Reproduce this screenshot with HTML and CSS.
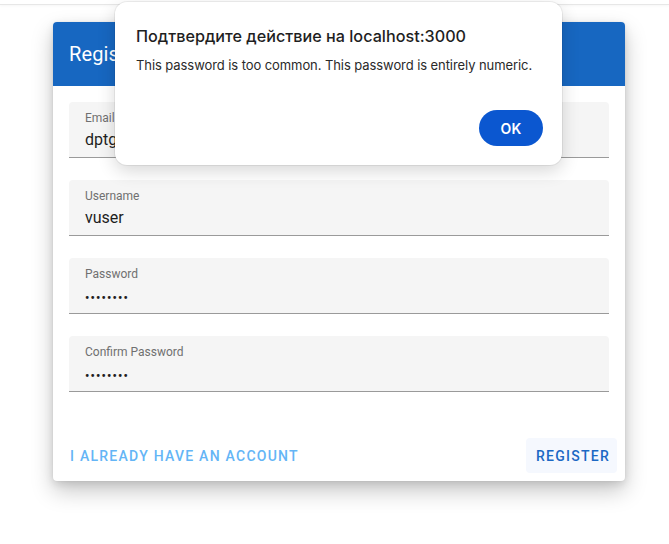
FILE: index.html
```html
<!DOCTYPE html>
<html lang="en">
<head>
<meta charset="utf-8">
<title>Register</title>
<link rel="stylesheet" href="styles.css">
</head>
<body>
<div class="topbar"></div>
<main class="page">
  <section class="card">
    <header class="card-header">
      <h1 class="card-title">Register</h1>
    </header>
    <div class="card-body">
      <div class="field">
        <span class="field-label">Email</span>
        <span class="field-value">dptgmail@example.com</span>
      </div>
      <div class="field">
        <span class="field-label">Username</span>
        <span class="field-value">vuser</span>
      </div>
      <div class="field">
        <span class="field-label">Password</span>
        <span class="field-value dots">••••••••</span>
      </div>
      <div class="field">
        <span class="field-label">Confirm Password</span>
        <span class="field-value dots">••••••••</span>
      </div>
    </div>
    <footer class="card-actions">
      <button class="btn btn-link">I already have an account</button>
      <button class="btn btn-register">Register</button>
    </footer>
  </section>
</main>
<div class="dialog" role="dialog">
  <h2 class="dialog-title">Подтвердите действие на localhost:3000</h2>
  <p class="dialog-text">This password is too common. This password is entirely numeric.</p>
  <div class="dialog-actions">
    <button class="dialog-ok">OK</button>
  </div>
</div>
</body>
</html>
```
FILE: styles.css
```css
* { box-sizing: border-box; }
html, body { margin: 0; padding: 0; background: #ffffff; }
body {
  font-family: Roboto, "Noto Sans", "Liberation Sans", sans-serif;
  width: 669px;
  height: 544px;
  overflow: hidden;
  position: relative;
}
.topbar {
  height: 5px;
  border-bottom: 1px solid #e7e7e7;
  box-shadow: 0 1px 3px rgba(0,0,0,0.04);
}
.page {
  padding: 17px 0 0 53px;
}
.card {
  width: 572px;
  background: #fff;
  border-radius: 4px;
  box-shadow: 0 10px 22px rgba(0,0,0,0.22), 0 3px 8px rgba(0,0,0,0.10), 0 0 2px rgba(0,0,0,0.08);
  overflow: hidden;
}
.card-header {
  height: 64px;
  background: #1767c1;
  display: flex;
  align-items: center;
  padding: 0 16px;
}
.card-title {
  margin: 0;
  color: #fff;
  font-weight: 400;
  font-size: 20px;
  letter-spacing: 0.1px;
}
.card-body {
  padding: 16px 16px 38px;
  display: flex;
  flex-direction: column;
  gap: 22px;
}
.field {
  height: 56px;
  background: #f5f5f5;
  border-radius: 4px 4px 0 0;
  border-bottom: 1px solid #9a9a9a;
  padding: 9px 16px 0;
  display: flex;
  flex-direction: column;
}
.field-label {
  font-size: 12px;
  color: #707070;
  line-height: 14px;
}
.field-value {
  font-size: 16px;
  color: #1e1e1e;
  line-height: 19px;
  margin-top: 5px;
}
.field-value.dots {
  font-size: 12px;
  font-weight: 700;
  letter-spacing: 1.2px;
  margin-top: 8px;
}
.card-actions {
  display: flex;
  justify-content: space-between;
  align-items: center;
  padding: 8px;
}
.btn {
  font-family: Roboto, "Noto Sans", sans-serif;
  font-weight: 500;
  font-size: 14px;
  text-transform: uppercase;
  letter-spacing: 1.25px;
  border: 0;
  background: transparent;
  height: 35px;
  padding: 0 8px;
  border-radius: 4px;
  cursor: pointer;
}
.btn-link { color: #64b5f6; padding-left: 9px; }
.btn-register {
  color: #1c68c4;
  background: #f5f8fe;
  padding: 0 9px 0 10px;
  width: 91px;
}
.dialog {
  position: absolute;
  left: 115px;
  top: 2px;
  width: 447px;
  height: 163px;
  background: #fff;
  border-radius: 12px;
  box-shadow: 0 6px 18px rgba(0,0,0,0.16), 0 0 0 1px rgba(0,0,0,0.06);
  padding: 24px 19px 19px 21px;
  display: flex;
  flex-direction: column;
  font-family: Inter, Roboto, "Noto Sans", sans-serif;
}
.dialog-title {
  margin: 0;
  font-size: 16.2px;
  font-weight: 500;
  color: #1f1f1f;
  line-height: 20px;
}
.dialog-text {
  margin: 10px 0 0;
  font-size: 13px;
  letter-spacing: -0.08px;
  color: #2a2a2a;
  line-height: 18px;
}
.dialog-actions {
  margin-top: auto;
  display: flex;
  justify-content: flex-end;
}
.dialog-ok {
  width: 64px;
  height: 36px;
  border: 0;
  border-radius: 18px;
  background: #0b57d0;
  color: #fff;
  font-family: Inter, Roboto, "Noto Sans", sans-serif;
  font-weight: 600;
  font-size: 14px;
  letter-spacing: 0.2px;
}
```
